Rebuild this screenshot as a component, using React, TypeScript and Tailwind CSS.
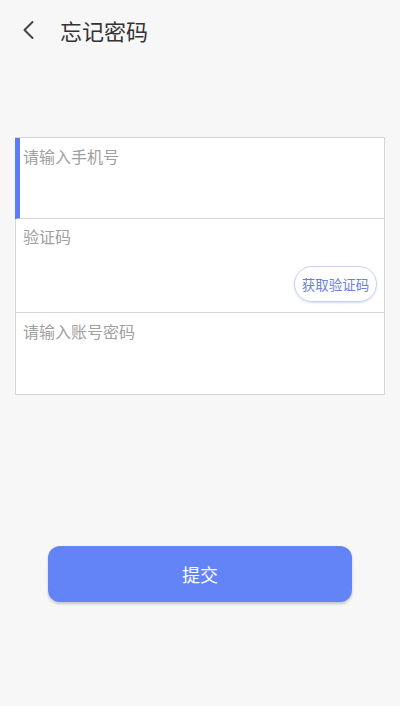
import React from "react";

export default function App() {
  const font = { fontFamily: '"Noto Sans CJK SC", "Noto Sans", sans-serif' };
  return (
    <div className="w-[400px] h-[706px] bg-[#f7f7f7] flex flex-col" style={font}>
      <div className="h-[60px] flex items-center shrink-0">
        <svg className="ml-[21px] w-[16px] h-[22px]" viewBox="0 0 16 22" fill="none">
          <path d="M11.5 3 L3.5 11 L11.5 19" stroke="#444" strokeWidth="2" strokeLinecap="round" strokeLinejoin="round" />
        </svg>
        <span className="ml-[23px] text-[22px] leading-[26px] text-[#333]">忘记密码</span>
      </div>
      <div className="h-[77px] shrink-0" />
      <div className="mx-[15px] w-[370px] bg-white border border-[#d6d6d6] flex flex-col">
        <div className="h-[81px] border-l-[5px] border-[#5b7cf6] -ml-px pl-[3px] pt-[6px] border-b border-b-[#d6d6d6]">
          <span className="text-[16px] leading-[22px] text-[#a0a0a0]">请输入手机号</span>
        </div>
        <div className="h-[94px] pl-[7px] pt-[6px] pr-[7px] border-b border-[#d6d6d6] flex flex-col">
          <span className="text-[16px] leading-[22px] text-[#a0a0a0]">验证码</span>
          <div className="flex justify-end mt-[19px]">
            <div className="w-[83px] h-[36px] rounded-full border border-[#c9d1ee] flex items-center justify-center text-[13.5px] text-[#6b80dd] shadow-[0_1px_2px_rgba(100,120,200,0.25)]">
              获取验证码
            </div>
          </div>
        </div>
        <div className="h-[81px] pl-[7px] pt-[6px]">
          <span className="text-[16px] leading-[22px] text-[#a0a0a0]">请输入账号密码</span>
        </div>
      </div>
      <div className="h-[151px] shrink-0" />
      <div className="mx-[48px] w-[304px] h-[56px] rounded-[12px] bg-[#6384f7] flex items-center justify-center text-white text-[18px] shadow-[0_2px_3px_rgba(0,0,0,0.2)]">
        提交
      </div>
    </div>
  );
}
